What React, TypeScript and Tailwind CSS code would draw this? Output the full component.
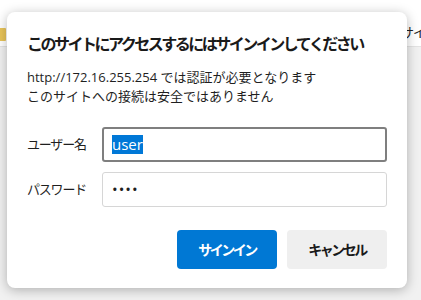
import React from "react";

export default function App() {
  const jp = { fontFamily: '"Segoe UI", "Open Sans", "Noto Sans CJK JP", sans-serif' } as React.CSSProperties;
  return (
    <div className="relative w-[421px] h-[300px] overflow-hidden bg-[#f1f1f1]" style={jp}>
      <div className="h-[47px] bg-white border-b border-[#e3e3e3] flex items-center justify-between">
        <div className="w-[6px] h-[13px] mt-[22px] bg-[#e8c45a] rounded-r-[1px]" />
        <div className="mt-[20px] text-[13px] text-[#222] mr-[-4px] tracking-[-1px]">サイ</div>
      </div>
      <div className="absolute left-[7px] top-[12px] w-[400px] h-[276px] bg-white rounded-[8px] shadow-[0_2px_12px_rgba(0,0,0,0.28)] px-[20px] pt-[22px] flex flex-col">
        <div className="text-[16px] font-bold text-[#1a1a1a] tracking-[-2.5px] leading-[20px]">このサイトにアクセスするにはサインインしてください</div>
        <div className="mt-[14px] text-[13px] text-[#1f1f1f] leading-[19px]">
          <div>http://172.16.255.254 では認証が必要となります</div>
          <div>このサイトへの接続は安全ではありません</div>
        </div>
        <div className="mt-[21px] grid grid-cols-[75px_1fr] gap-y-[10px] items-center">
          <div className="text-[13px] text-[#1f1f1f] tracking-[-1.2px]">ユーザー名</div>
          <div className="h-[35px] border-2 border-[#7f7f7f] rounded-[3px] flex items-center pl-[8px]">
            <span className="bg-[#0078d7] text-white text-[15px] leading-[19px]">user</span>
          </div>
          <div className="text-[13px] text-[#1f1f1f] tracking-[-1.2px]">パスワード</div>
          <div className="h-[35px] border border-[#d6d6d6] rounded-[3px] flex items-center pl-[9px]">
            <span className="text-[#1f1f1f] text-[15px] tracking-[1px]">••••</span>
          </div>
        </div>
        <div className="mt-[23px] flex justify-end gap-[10px]">
          <div className="w-[100px] h-[39px] rounded-[4px] bg-[#0078d4] text-white font-bold text-[14px] tracking-[-2.5px] flex items-center justify-center">サインイン</div>
          <div className="w-[100px] h-[39px] rounded-[4px] bg-[#efefef] text-[#1a1a1a] font-bold text-[14px] tracking-[-2.5px] flex items-center justify-center">キャンセル</div>
        </div>
      </div>
    </div>
  );
}
